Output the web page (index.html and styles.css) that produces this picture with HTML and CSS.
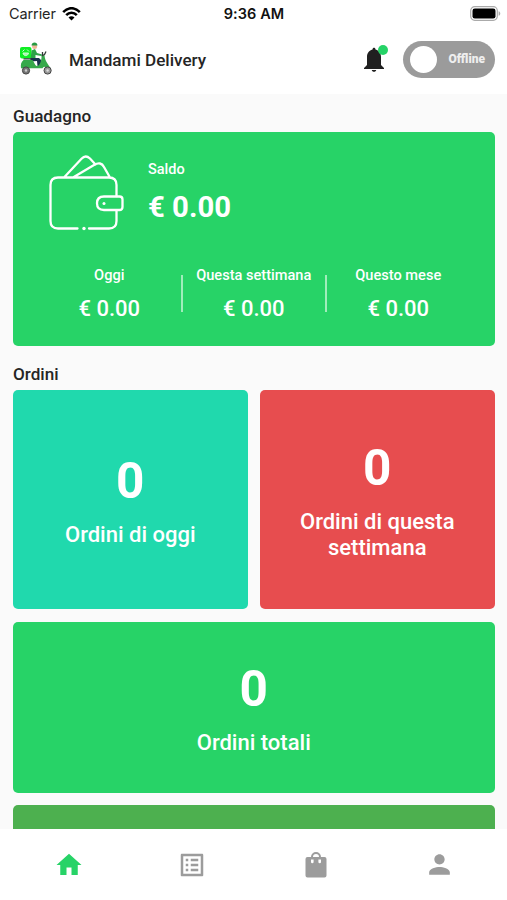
FILE: index.html
```html
<!DOCTYPE html>
<html lang="it">
<head>
<meta charset="utf-8">
<title>Mandami Delivery</title>
<link rel="stylesheet" href="styles.css">
</head>
<body>
<div class="status">
  <div class="carrier"><span>Carrier</span>
    <svg width="19" height="14" viewBox="0 0 19 14" fill="none" stroke="#000" stroke-width="2.5"><path d="M1.2 5.2C6-.2 13-.2 17.8 5.2M4.2 8.2c3-3.3 7.600-3.300 10.600 0"/><path d="M6.500 10.600c1.700-1.700 4.300-1.700 6 0l-3 3z" fill="#000" stroke="none"/></svg>
  </div>
  <span class="time">9:36 AM</span>
  <svg class="battery" width="31" height="15" viewBox="0 0 31 15"><rect x=".7" y=".7" width="26.600" height="13.600" rx="4" fill="#fff" stroke="#aaa" stroke-width="1.200"/><rect x="2.500" y="2.500" width="23" height="10" rx="2.300"/><path d="M28.600 5.200c2.200.6 2.200 4 0 4.600z" fill="#aaa"/></svg>
</div>
<header class="header">
  <svg class="logo" width="34" height="34" viewBox="0 0 34 34">
    <rect x="1" y="5" width="11.500" height="11.500" rx="2" fill="#10ee24"/>
    <path d="M3.500 9.500l2-2M10 9.500l-2-2M4 11c.5 3.500 5 3.500 5.500 0z" fill="#a9f8ae" stroke="#c9ffcc" stroke-width="1"/>
    <circle cx="15.600" cy="4.500" r="2.500" fill="#efb796"/>
    <path d="M12.500 3.500c0-4 6-4 6 0z" fill="#279b43"/>
    <path d="M12.500 8.500l3.500-1.500 2 4 5 1.500-.5 1.500-6-1v4.500h-5z" fill="#2ba248"/>
    <path d="M11.500 16h8.500l2 2v6h-3.500l-.5-5-6.500.5z" fill="#17334c"/>
    <path d="M4.500 18h8.500c2 0 2.500 6 5 6 3 0 5-6.500 4.500-11l3 .3c.3 6 4 9 6 13h-4c-1.500-2-3-2-4 0H2c-.5-4 0-6 2.500-8.300z" fill="#36a94b"/>
    <path d="M4.500 16.800h8M23.500 10v3.500l2-1 1.500-3" fill="none" stroke="#333c38" stroke-width="1.300"/>
    <circle cx="7" cy="28.500" r="3.600" fill="#777" stroke="#444"/><circle cx="28.600" cy="28.500" r="3.600" fill="#999" stroke="#444"/><circle cx="7" cy="28.500" r="1.200" fill="#ccc"/><circle cx="28.600" cy="28.500" r="1.200" fill="#ddd"/>
  </svg>
  <h1 class="title">Mandami Delivery</h1>
  <div class="bell">
    <svg width="20" height="25" viewBox="0 0 20 25" fill="#202020"><path d="M8.500 2.500C8.500 0 11.500 0 11.500 2.500 15.500 3.600 17 6.700 17 10v8l3 3v1H0v-1l3-3v-8c0-3.300 1.500-6.400 5.500-7.500zM7.800 23h4.400c0 2.400-4.400 2.400-4.400 0z"/></svg>
    <i class="dot"></i>
  </div>
  <div class="toggle"><i class="knob"></i><span>Offline</span></div>
</header>
<main class="content">
  <h2 class="heading">Guadagno</h2>
  <section class="earnings">
    <div class="balance">
      <svg width="76" height="76" viewBox="0 0 76 76" fill="none" stroke="#fff" stroke-width="2.300" stroke-linecap="round"><path d="M28.500 73.500H9Q1.500 73.500 1.500 66V30Q1.500 22.500 9 22.500H60Q67.500 22.500 67.500 30V41M67.500 55.500V66Q67.500 73.500 60 73.500H40M15 22.500L32.500 3.800Q36.500-.5 41 3.500L46.500 9.500M24 22.500L45 10Q52 6 55 12L61 22.500"/><path d="M55 41.500H70.500Q73.500 41.500 73.500 44.500V52Q73.500 55 70.500 55H55Q48 55 48 48.300Q48 41.500 55 41.500Z"/><circle cx="55" cy="48.500" r="1.500" fill="#fff" stroke="none"/><circle cx="35" cy="73.500" r="1.700" fill="#fff" stroke="none"/></svg>
      <div><div class="label">Saldo</div><div class="amount">€ 0.00</div></div>
    </div>
    <div class="periods">
      <div class="period"><div class="label">Oggi</div><div class="value">€ 0.00</div></div>
      <div class="period"><div class="label">Questa settimana</div><div class="value">€ 0.00</div></div>
      <div class="period"><div class="label">Questo mese</div><div class="value">€ 0.00</div></div>
    </div>
  </section>
  <h2 class="heading orders-heading">Ordini</h2>
  <section class="orders">
    <div class="card teal"><div class="count">0</div><div class="caption">Ordini di oggi</div></div>
    <div class="card red"><div class="count">0</div><div class="caption">Ordini di questa settimana</div></div>
    <div class="card total"><div class="count">0</div><div class="caption">Ordini totali</div></div>
    <div class="card next"></div>
  </section>
</main>
<nav class="nav">
  <a class="active"><svg width="30" height="30" viewBox="0 0 24 24"><path d="M10 20v-6h4v6h5v-8h3L12 3 2 12h3v8z"/></svg></a>
  <a><svg width="30" height="30" viewBox="0 0 24 24"><path d="M19 5v14H5V5h14m1.100-2H3.900c-.5 0-.9.4-.9.9v16.200c0 .4.400.9.900.9h16.200c.4 0 .9-.5.9-.9V3.900c0-.5-.5-.9-.9-.9zM11 7h6v2h-6V7zm0 4h6v2h-6v-2zm0 4h6v2h-6zM7 7h2v2H7zm0 4h2v2H7zm0 4h2v2H7z"/></svg></a>
  <a><svg width="22" height="27" viewBox="0 0 22 27"><path fill-rule="evenodd" d="M6 6a5 5 0 0 1 10 0h3.500Q21.500 6 21.500 8V24.500Q21.500 26.500 19.500 26.500H2.500Q.5 26.500.5 24.500V8Q.5 6 2.500 6zM8 6h6a3 3 0 0 0-6 0zM6 8.500V11a1.300 1.300 0 0 0 2.600 0V8.500zM13.400 8.500V11a1.300 1.300 0 0 0 2.600 0V8.500z"/></svg></a>
  <a><svg width="31" height="31" viewBox="0 0 24 24"><path d="M12 12c2.210 0 4-1.790 4-4s-1.790-4-4-4-4 1.790-4 4 1.790 4 4 4zm0 2c-2.670 0-8 1.340-8 4v2h16v-2c0-2.660-5.330-4-8-4z"/></svg></a>
</nav>
</body>
</html>
```
FILE: styles.css
```css
* { box-sizing: border-box; }
body {
  margin: 0;
  width: 507px;
  height: 900px;
  overflow: hidden;
  display: flex;
  flex-direction: column;
  font-family: Roboto, sans-serif;
  font-weight: 500;
  color: #252525;
  background: #fff;
}
h1, h2 { margin: 0; font-weight: 500; }
svg { display: block; flex: none; }
.status {
  height: 27px;
  flex: none;
  display: grid;
  grid-template-columns: 1fr auto 1fr;
  align-items: center;
  padding: 0 6px 0 9px;
  font-family: Inter, sans-serif;
  font-size: 14.5px;
}
.carrier { display: flex; align-items: center; gap: 6px; font-weight: 400; letter-spacing: -.1px; }
.time { font-weight: 600; color: #111; letter-spacing: .1px; margin-left: -2px; }
.battery { justify-self: end; }
.header {
  height: 67px;
  flex: none;
  display: flex;
  align-items: center;
  padding: 0 12px 0 19px;
}
.logo { margin-top: -4px; }
.title { font-size: 17.1px; line-height: 22px; margin: -2px 0 0 16px; }
.bell { position: relative; margin: -2px 19px 0 auto; }
.dot {
  position: absolute;
  top: -2px;
  right: -4px;
  width: 10px;
  height: 10px;
  border-radius: 50%;
  background: #26d367;
}
.toggle {
  width: 92px;
  height: 37px;
  border-radius: 19px;
  background: #9b9b9b;
  display: flex;
  align-items: center;
  justify-content: space-between;
  padding: 0 10px 0 7px;
  margin-top: -2px;
  color: #eee;
  font-size: 12px;
  font-weight: 900;
}
.toggle span { margin-top: -1px; }
.knob { width: 27px; height: 27px; border-radius: 50%; background: #fff; }
.content { flex: 1; min-height: 0; overflow: hidden; background: #fafafa; padding: 11px 12.500px 0 13px; }
.heading { font-size: 17.1px; line-height: 22px; }
.earnings {
  height: 214px;
  margin-top: 4.600px;
  border-radius: 5px;
  background: #27d367;
  color: #fff;
  padding: 23px 24px 0;
}
.balance { display: flex; gap: 23px; padding-left: 12px; }
.label { font-size: 14.5px; line-height: 18px; padding-top: 6px; }
.amount { font-size: 29.300px; line-height: 36px; font-weight: 700; margin-top: 10px; }
.periods { display: grid; grid-template-columns: repeat(3, 1fr); margin-top: 29.400px; text-align: center; }
.period { position: relative; white-space: nowrap; }
.period .label { font-size: 14.600px; padding-top: 6px; }
.period + .period::before {
  content: "";
  position: absolute;
  left: -1px;
  top: 15px;
  width: 2px;
  height: 37px;
  background: #a0edbb;
}
.value { font-size: 22px; line-height: 26px; margin-top: 12px; }
.orders-heading { margin-top: 17px; }
.orders { display: grid; grid-template-columns: 1fr 1fr; grid-template-rows: 219.500px 171px 170px; gap: 12.500px; margin-top: 5px; }
.card {
  border-radius: 5px;
  color: #fff;
  text-align: center;
  display: flex;
  flex-direction: column;
  align-items: center;
  justify-content: center;
  padding: 2px 30px 0;
}
.teal { background: #20d9ad; }
.red { background: #e74d4f; }
.total { grid-column: 1 / 3; background: #27d367; padding-top: 1px; }
.next { grid-column: 1 / 3; background: #4db04f; }
.count { font-size: 49.500px; line-height: 58px; font-weight: 700; }
.caption { font-size: 22px; line-height: 26px; margin-top: 12px; }
.nav {
  height: 71px;
  flex: none;
  display: grid;
  grid-template-columns: repeat(4, 1fr);
  place-items: center;
  padding: 0 6px 0 7px;
  background: #fff;
}
.nav a { fill: #9c9c9c; }
.nav .active { fill: #27d367; }
```
